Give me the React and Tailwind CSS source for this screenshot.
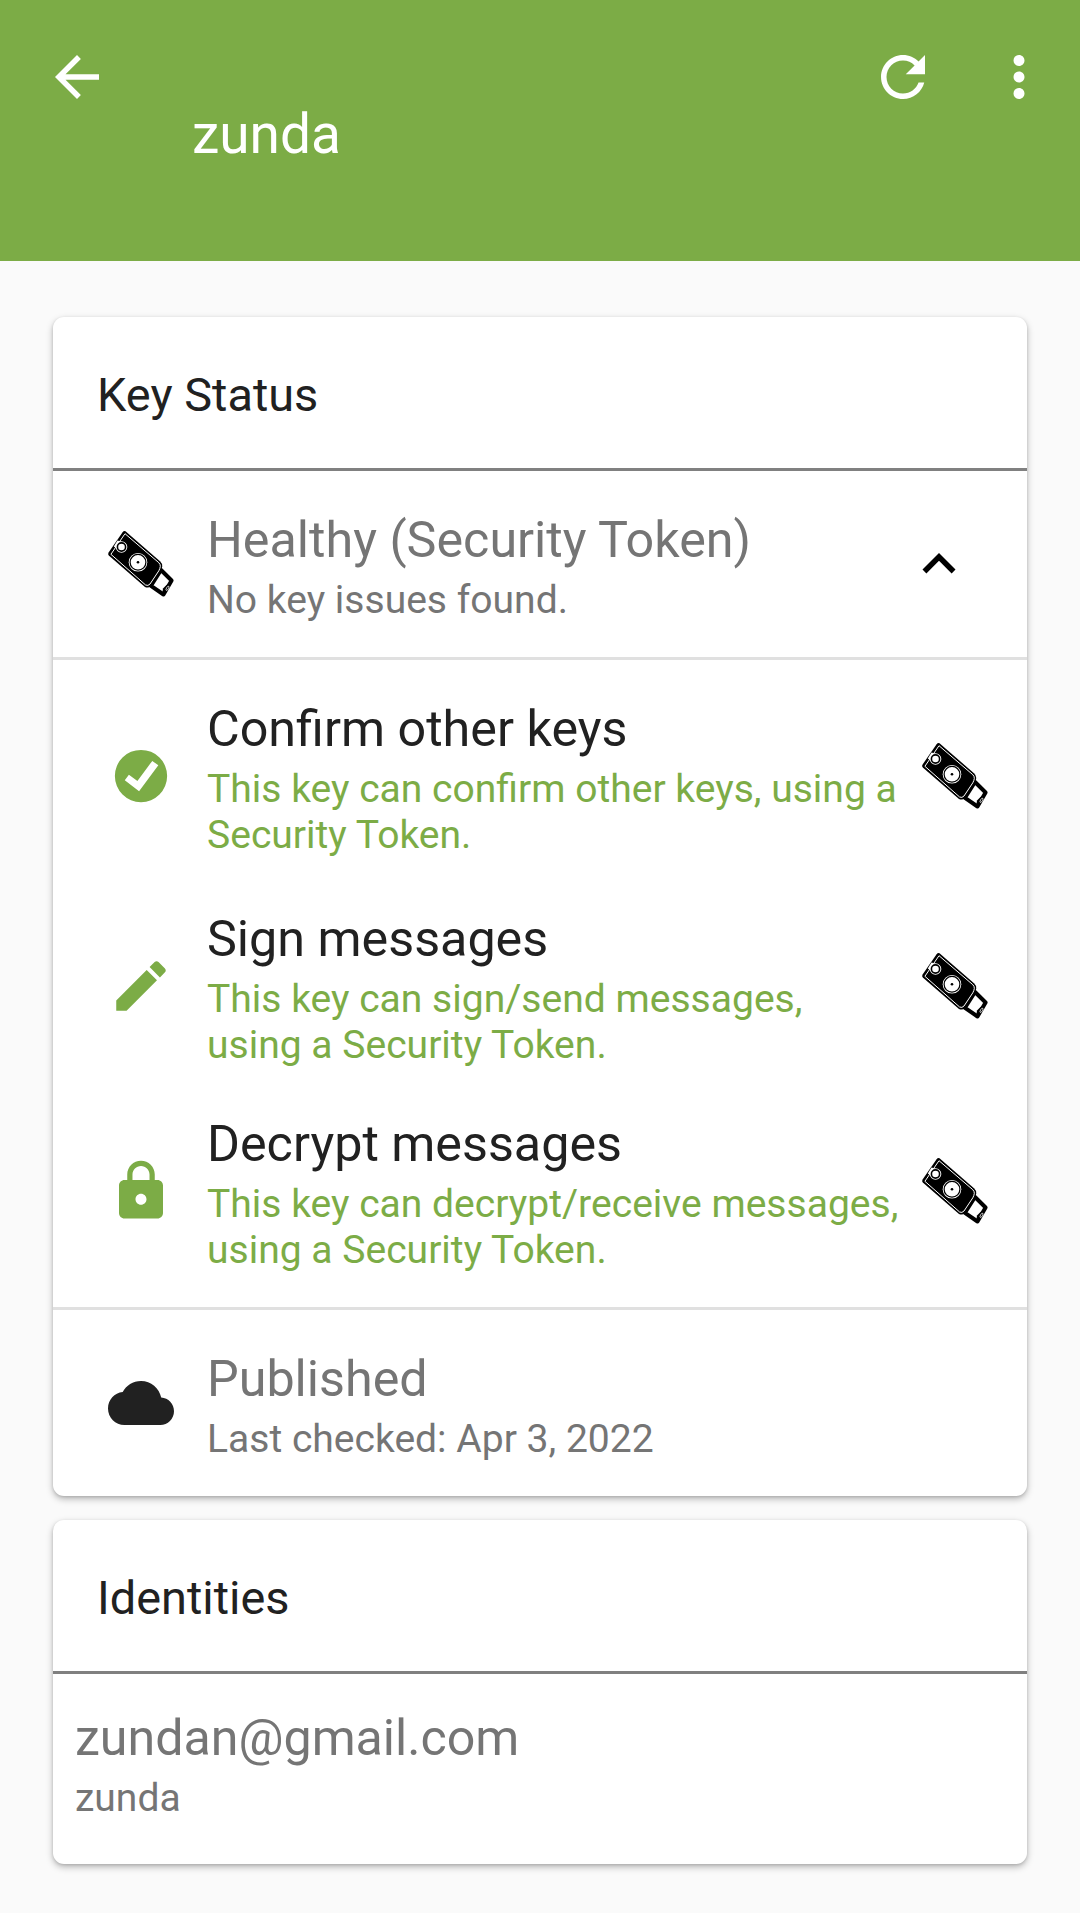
const green = 'text-[#7cac46]';

function Icon({ d, className = '' }) {
  return (
    <svg viewBox="0 0 24 24" fill="currentColor" className={`block size-[66px] shrink-0 ${className}`}>
      <path d={d} fillRule="evenodd" />
    </svg>
  );
}

function TokenIcon() {
  return (
    <svg viewBox="0 0 66 66" className="block size-[66px] shrink-0 overflow-visible">
      <path d="M53 39L63.600 49.500L55.500 63.500L43 54.800Z" fill="#fff" stroke="#000" strokeWidth="4" strokeLinejoin="round" />
      <path d="M54 64L55 57.500L58.500 54L63.500 51.500L56.500 64Z" fill="#000" />
      <ellipse cx="59.500" cy="57.300" rx="1" ry="2.400" transform="rotate(30 59.500 57.300)" fill="none" stroke="#fff" strokeWidth="0.700" />
      <path d="M17.500 0.300L52 30.200Q54.400 32.400 54.200 35.200Q54 38 52.600 40.500L43 55Q40.500 57.600 37 56L0.800 24.600Q-0.400 23.300 0.600 21.500L14.400 1.400Q16 -0.600 17.500 0.300Z" fill="#000" />
      <path d="M17 2.700L50.800 31.700Q52.600 33.600 52.300 35.500Q52 37.600 50.800 39.800L42 53Q40 55.300 37.600 54L2.900 23.300Z" fill="none" stroke="#fff" strokeWidth="1" strokeLinejoin="round" />
      <path d="M9.500 9.500L13 10.500L8 17L5.800 15.500Z" fill="#fff" />
      <circle cx="13.500" cy="16" r="5.800" fill="#fff" />
      <circle cx="13.500" cy="16" r="4.100" fill="none" stroke="#000" strokeWidth="1.600" />
      <circle cx="30" cy="31.300" r="9.300" fill="#fff" />
      <circle cx="30" cy="31.300" r="7.900" fill="none" stroke="#000" strokeWidth="1.200" />
      <circle cx="30" cy="31.300" r="1.300" fill="#000" />
    </svg>
  );
}

function Card({ title, className, children }) {
  return (
    <section className={`mx-[53px] rounded-[11px] bg-white shadow-[0_3px_7px_rgba(0,0,0,0.27),0_1px_3px_rgba(0,0,0,0.12)] ${className}`}>
      <h2 className="flex h-[154px] items-center border-b-[3px] border-[#808080] pl-[44px] pt-[3px] text-[46.9px] leading-[55px] text-[#212121]">
        {title}
      </h2>
      {children}
    </section>
  );
}

function Row({ icon, title, children, end, className = '', titleClass = 'text-[#757575]', subClass = 'text-[#757575]' }) {
  return (
    <div className={`flex pl-[55px] ${className}`}>
      <div className="mb-[6px] flex w-[66px] shrink-0 items-center justify-center">{icon}</div>
      <div className="ml-[33px] w-[692px] shrink-0 whitespace-nowrap">
        <div className={`text-[50.25px] leading-[58px] ${titleClass}`}>{title}</div>
        <div className={`mt-[8px] text-[39.05px] leading-[46px] ${subClass}`}>{children}</div>
      </div>
      <div className="mb-[6px] ml-[23px] flex shrink-0 items-center">{end}</div>
    </div>
  );
}

const capabilities = [
  {
    title: 'Confirm other keys',
    lines: ['This key can confirm other keys, using a', 'Security Token.'],
    icon: 'M12 2.5a9.5 9.5 0 1 0 0 19a9.5 9.5 0 0 0 0-19zM7.6 11.5L10.7 13.8L16.1 6.5L18.3 8.1L11.3 17.5L6.1 13.5z',
    row: 'mt-[40px] h-[158px]',
  },
  {
    title: 'Sign messages',
    lines: ['This key can sign/send messages,', 'using a Security Token.'],
    icon: 'M3 17.25V21h3.75L17.81 9.94l-3.75-3.75L3 17.25zM20.71 7.04c.39-.39.39-1.02 0-1.41l-2.34-2.34c-.39-.39-1.02-.39-1.41 0l-1.83 1.83 3.75 3.75 1.83-1.83z',
    row: 'mt-[52px] h-[158px]',
  },
  {
    title: 'Decrypt messages',
    lines: ['This key can decrypt/receive messages,', 'using a Security Token.'],
    icon: 'M18 8h-1V6c0-2.76-2.24-5-5-5S7 3.24 7 6v2H6c-1.1 0-2 .9-2 2v10c0 1.1.9 2 2 2h12c1.1 0 2-.9 2-2V10c0-1.1-.9-2-2-2zM12 17c-1.1 0-2-.9-2-2s.9-2 2-2 2 .9 2 2-.9 2-2 2zM15.1 8H8.9V6c0-1.71 1.39-3.1 3.1-3.1s3.1 1.39 3.1 3.1v2z',
    row: 'mt-[47px] h-[158px]',
  },
];

export default function App() {
  return (
    <main className="h-[1913px] w-[1080px] overflow-hidden bg-[#fafafa] font-[Roboto,sans-serif]">
      <header className="flex h-[261px] bg-[#7cac46] text-white">
        <Icon className="ml-[44px] mt-[44px]" d="M20 11H7.83l5.59-5.59L12 4l-8 8 8 8 1.41-1.41L7.83 13H20v-2z" />
        <h1 className="ml-[82px] mt-[101px] text-[55px] leading-[66px]">zunda</h1>
        <Icon className="ml-auto mt-[44px]" d="M17.65 6.35C16.2 4.9 14.21 4 12 4c-4.42 0-7.99 3.58-7.99 8s3.57 8 7.99 8c3.73 0 6.84-2.55 7.73-6h-2.08c-.82 2.33-3.04 4-5.65 4-3.31 0-6-2.69-6-6s2.69-6 6-6c1.66 0 3.14.69 4.22 1.78L13 11h7V4l-2.35 2.35z" />
        <Icon className="ml-[50px] mr-[28px] mt-[44px]" d="M12 8c1.1 0 2-.9 2-2s-.9-2-2-2-2 .9-2 2 .9 2 2 2zm0 2c-1.1 0-2 .9-2 2s.9 2 2 2 2-.9 2-2-.9-2-2-2zm0 6c-1.1 0-2 .9-2 2s.9 2 2 2 2-.9 2-2-.9-2-2-2z" />
      </header>

      <Card title="Key Status" className="mt-[56px] h-[1179px]">
        <Row
          className="h-[189px] border-b-[3px] border-[#e0e0e0] pb-[34px] pt-[40px]"
          icon={<TokenIcon />}
          title="Healthy (Security Token)"
          end={<Icon d="M7.41 15.41L12 10.83l4.59 4.58L18 14l-6-6-6 6z" className="-ml-[16px] text-black" />}
        >
          No key issues found.
        </Row>
        <div className="flex h-[650px] flex-col border-b-[3px] border-[#e0e0e0]">
          {capabilities.map((c) => (
            <Row
              key={c.title}
              className={c.row}
              icon={<Icon d={c.icon} className={green} />}
              title={c.title}
              titleClass="text-[#212121]"
              subClass={green}
              end={<TokenIcon />}
            >
              {c.lines[0]}
              <br />
              {c.lines[1]}
            </Row>
          ))}
        </div>
        <Row
          className="h-[186px] pb-[34px] pt-[40px]"
          icon={<Icon className="text-[#212121]" d="M19.35 10.04C18.67 6.59 15.64 4 12 4 9.11 4 6.6 5.64 5.35 8.04 2.34 8.36 0 10.91 0 14c0 3.31 2.69 6 6 6h13c2.76 0 5-2.24 5-5 0-2.64-2.05-4.78-4.65-4.96z" />}
          title="Published"
        >
          Last checked: Apr 3, 2022
        </Row>
      </Card>

      <Card title="Identities" className="mt-[24px] h-[344px]">
        <div className="pl-[22px] pt-[35px] text-[#757575]">
          <div className="text-[50.15px] leading-[58px]">zundan@gmail.com</div>
          <div className="mt-[8px] text-[39px] leading-[46px]">zunda</div>
        </div>
      </Card>
    </main>
  );
}
